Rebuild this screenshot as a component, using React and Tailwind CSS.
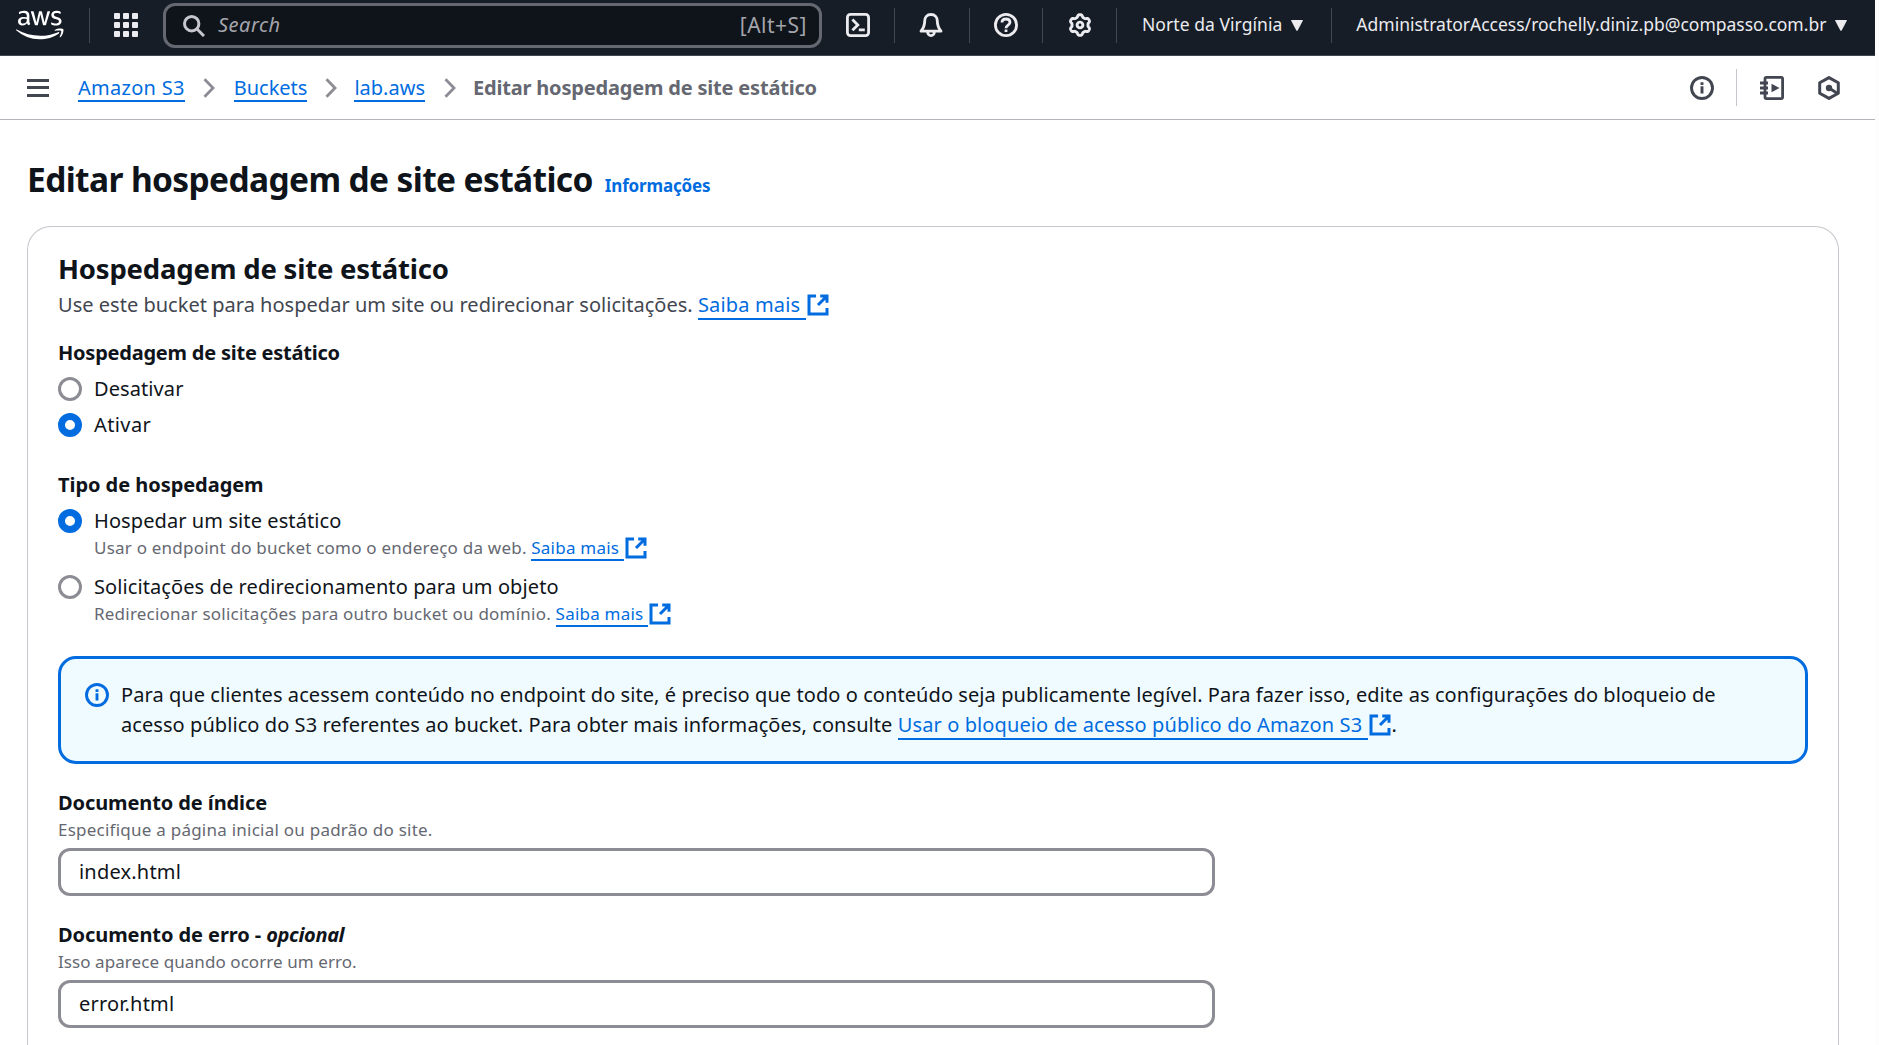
import React from "react";
import { FaAws } from "react-icons/fa";

const GEAR = (() => {
  const pts = [];
  for (let i = 0; i < 180; i++) {
    const a = (i / 180) * Math.PI * 2;
    const r = 9.15 + 1.25 * Math.tanh(1.8 * Math.cos(6 * (a - Math.PI / 2)));
    pts.push(`${(12 + r * Math.cos(a)).toFixed(2)} ${(12 + r * Math.sin(a)).toFixed(2)}`);
  }
  return `M${pts.join("L")}Z`;
})();

function Icon({ children, className = "", w = 3 }) {
  return (
    <svg viewBox="0 0 24 24" width="24" height="24" fill="none" stroke="currentColor" strokeWidth={w} className={`block h-6 w-6 shrink-0 ${className}`}>
      {children}
    </svg>
  );
}

const InfoIcon = ({ className = "" }) => (
  <Icon className={className} w={2.9}>
    <circle cx="12" cy="12" r="10.5" />
    <path d="M12 10.3v7.2M12 6.2v2.7" />
  </Icon>
);

function External({ small }) {
  return (
    <svg
      viewBox="0 0 16 16"
      fill="none"
      stroke="#006ce0"
      strokeWidth="2"
      className={small ? "inline-block h-6 w-6 align-[-6px]" : "inline-block h-6 w-6 align-[-5px]"}
    >
      <path d="M9.5 2H14v4.5M8 8 14 2M14 10v4H2V2h4.7" />
    </svg>
  );
}

function Link({ children, small, className = "" }) {
  return (
    <span className="whitespace-nowrap">
      <a className={`border-b-2 border-[#006ce0] text-[#006ce0] ${className}`}>{children}&nbsp;</a>
      <External small={small} />
    </span>
  );
}

function Radio({ checked }) {
  return checked ? (
    <span className="h-6 w-6 shrink-0 rounded-full border-[7px] border-[#006ce0] bg-white" />
  ) : (
    <span className="h-6 w-6 shrink-0 rounded-full border-3 border-[#8c8c94] bg-white" />
  );
}

function Option({ checked, label, className = "", children }) {
  return (
    <div className={`flex ${className}`}>
      <div className="mr-3 flex h-[30px] items-center">
        <Radio checked={checked} />
      </div>
      <div>
        <div className="h-[30px] leading-[30px] tracking-[0.09px]">{label}</div>
        {children}
      </div>
    </div>
  );
}

const Label = ({ children, className = "" }) => (
  <div className={`h-[30px] font-bold leading-[30px] ${className}`}>{children}</div>
);

const Field = ({ value }) => (
  <input
    readOnly
    defaultValue={value}
    className="block h-12 w-[1157px] rounded-xl border-3 border-[#8c8c94] bg-white px-[18px] pb-[2px] tracking-[0.2px] outline-none"
  />
);

const Crumb = ({ children, className }) => (
  <a className={`mt-px border-b-2 border-[#006ce0] leading-[25px] text-[#006ce0] ${className}`}>{children}</a>
);

const Chevron = ({ className }) => (
  <svg viewBox="0 0 12 20" className={`h-5 w-3 shrink-0 ${className}`} fill="none" stroke="#8c8c94" strokeWidth="2.8">
    <path d="M1.5 1.2 10 10l-8.5 8.8" />
  </svg>
);

const Divider = ({ className }) => <span className={`h-[35px] w-px shrink-0 bg-[#424650] ${className}`} />;

const Caret = ({ className }) => (
  <svg viewBox="0 0 12 11" className={`h-[11px] w-3 shrink-0 ${className}`} fill="#ebebf0">
    <path d="M.6 0h10.8q.8 0 .4.8L6.8 10.3q-.8 1-1.6 0L.2.8Q-.2 0 .6 0Z" />
  </svg>
);

function TopBar() {
  return (
    <header className="flex h-14 shrink-0 items-start border-b border-[#424650] bg-[#161d26] text-[#ebebf0]">
      <FaAws className="ml-4 mt-[6px] h-[38px] w-[47.5px] shrink-0 text-white" />
      <div className="flex h-[50px] flex-1 items-center">
        <Divider className="ml-[25.5px]" />
        <div className="ml-[24px] grid w-6 shrink-0 grid-cols-3 gap-[3px]">
          {Array.from({ length: 9 }, (_, i) => (
            <span key={i} className="h-[6px] w-[6px] rounded-[1px] bg-[#ebebf0]" />
          ))}
        </div>
        <div className="ml-[25px] mt-px flex h-[45px] w-[659px] shrink-0 items-center rounded-xl border-3 border-[#656871] bg-[#0f141a]">
          <svg viewBox="0 0 22 22" className="ml-[17px] h-[22px] w-[22px]" fill="none" stroke="#c6c6cd" strokeWidth="3">
            <circle cx="8.7" cy="8.7" r="7.2" />
            <path d="m14 14 7 7" />
          </svg>
          <span className="mb-[2px] ml-[13px] italic tracking-[0.5px] text-[#a4a4ad]">Search</span>
          <span className="mb-[2px] ml-auto mr-[12px] text-[21px] leading-7 tracking-[0.5px] text-[#a4a4ad]">[Alt+S]</span>
        </div>
        <Icon w={2.8} className="ml-[24px]">
          <rect x="1.4" y="1.4" width="21.2" height="21.2" rx="3" />
          <path d="m6.4 6.6 5.4 5.3-5.4 5.3M12.8 16.8h6" />
        </Icon>
        <Divider className="ml-[24px]" />
        <Icon w={2.8} className="ml-[24px]">
          <path strokeLinejoin="round" d="M12 1.5c-4 0-6.3 2.8-6.3 6.4 0 4.7-1.2 7.1-3.7 10.3h20c-2.5-3.2-3.7-5.6-3.7-10.3 0-3.6-2.3-6.4-6.3-6.4Z" />
          <path d="M8.6 18.5c0 2.3 1.4 4.1 3.4 4.1s3.4-1.8 3.4-4.1" />
        </Icon>
        <Divider className="ml-[26px]" />
        <Icon w={2.8} className="ml-[24px]">
          <circle cx="12" cy="12" r="10.6" />
          <path d="M8 9.6C8 7.3 9.7 6 12 6s4 1.3 4 3.3c0 2.7-4 2.9-4 5.9M12 16.5v2.6" />
        </Icon>
        <Divider className="ml-[24px]" />
        <Icon w={2.9} className="ml-[25px]">
          <path d={GEAR} strokeLinejoin="round" />
          <circle cx="12" cy="12" r="2.9" />
        </Icon>
        <Divider className="ml-[24px]" />
        <span className="mb-px ml-[25px] whitespace-nowrap text-[17.5px] tracking-[0.05px]">Norte da Virgínia</span>
        <Caret className="ml-[9px]" />
        <Divider className="ml-[28px]" />
        <span className="mb-px ml-[24px] whitespace-nowrap text-[17.5px]">AdministratorAccess/rochelly.diniz.pb@compasso.com.br</span>
        <Caret className="ml-[9px]" />
      </div>
    </header>
  );
}

function Breadcrumbs() {
  return (
    <nav className="flex h-16 shrink-0 items-center border-b border-[#b4b4bb] text-[#424650]">
      <div className="ml-[27px] flex w-[22px] flex-col gap-[4.5px]">
        <span className="h-[3px] bg-[#424650]" />
        <span className="h-[3px] bg-[#424650]" />
        <span className="h-[3px] bg-[#424650]" />
      </div>
      <Crumb className="ml-[29px] tracking-[0.28px]">Amazon S3</Crumb>
      <Chevron className="ml-[18px]" />
      <Crumb className="ml-[19px]">Buckets</Crumb>
      <Chevron className="ml-[18px]" />
      <Crumb className="ml-[17px]">lab.aws</Crumb>
      <Chevron className="ml-[19px]" />
      <span className="ml-[17px] font-bold leading-[27px] tracking-[-0.19px] text-[#656871]">Editar hospedagem de site estático</span>
      <InfoIcon className="ml-auto" />
      <span className="ml-[22px] h-[37px] w-px bg-[#c6c6cd]" />
      <Icon w={2.8} className="ml-[23px]">
        <rect x="5" y="1.4" width="17.6" height="21.2" rx="1.5" />
        <path d="M0 7h8M0 12h8M0 17h8" />
        <path d="M11.5 7.8v8.4l8-4.2z" fill="currentColor" stroke="none" />
      </Icon>
      <Icon w={3} className="ml-[33px] mr-[34px]">
        <path d="M12 1.6 21.3 6.8v10.4L12 22.4 2.7 17.2V6.8Z" strokeLinejoin="round" />
        <circle cx="12" cy="12" r="3.2" fill="currentColor" stroke="none" />
        <path d="m12 12 8.5 5.5" />
      </Icon>
    </nav>
  );
}

export default function App() {
  return (
    <div className="h-[1045px] w-full overflow-hidden bg-[#fdfdfd] font-['Noto_Sans',sans-serif] text-[20px] text-[#0f141a]">
      <div className="flex h-full w-[1875px] flex-col bg-white">
        <TopBar />
        <Breadcrumbs />
        <div className="flex flex-1 flex-col pl-[27px] pr-[36px] pt-[36px]">
          <div className="flex h-[47px] items-baseline">
            <h1 className="text-[33.5px] font-bold leading-[46px] tracking-[-0.62px]">Editar hospedagem de site estático</h1>
            <a className="ml-[12px] text-[17px] font-bold tracking-[-0.15px] text-[#006ce0]">Informações</a>
          </div>

          <section className="mt-[23px] flex-1 rounded-t-3xl border border-b-0 border-[#c6c6cd] pl-[30px] pr-[30px] pt-[24px]">
            <h2 className="h-9 text-[27.5px] font-bold leading-9 tracking-[-0.2px]">Hospedagem de site estático</h2>
            <p className="mt-[3px] h-[30px] leading-[30px] tracking-[0.02px] text-[#424650]">
              Use este bucket para hospedar um site ou redirecionar solicitações. <Link className="tracking-[0.15px]">Saiba mais</Link>
            </p>

            <Label className="mt-[18px] tracking-[-0.23px]">Hospedagem de site estático</Label>
            <Option className="mt-[6px]" label="Desativar" />
            <Option className="mt-[6px]" label={<span className="tracking-[0.4px]">Ativar</span>} checked />

            <Label className="mt-[30px] tracking-[-0.05px]">Tipo de hospedagem</Label>
            <Option className="mt-[6px]" label="Hospedar um site estático" checked>
              <div className="h-6 text-[17px] leading-6 tracking-[0.22px] text-[#656871]">
                Usar o endpoint do bucket como o endereço da web. <Link small>Saiba mais</Link>
              </div>
            </Option>
            <Option className="mt-[12px]" label="Solicitações de redirecionamento para um objeto">
              <div className="h-6 text-[17px] leading-6 tracking-[0.22px] text-[#656871]">
                Redirecionar solicitações para outro bucket ou domínio. <Link small>Saiba mais</Link>
              </div>
            </Option>

            <div className="mt-[30px] flex h-[108px] rounded-[18px] border-3 border-[#006ce0] bg-[#f0fbff] pl-[24px] pt-[21px]">
              <InfoIcon className="mt-[3px] text-[#006ce0]" />
              <div className="ml-[12px] whitespace-nowrap leading-[30px] tracking-[0.07px]">
                <div className="h-[30px]">
                  Para que clientes acessem conteúdo no endpoint do site, é preciso que todo o conteúdo seja publicamente legível. Para fazer isso, edite as configurações do bloqueio de
                </div>
                <div className="h-[30px]">
                  acesso público do S3 referentes ao bucket. Para obter mais informações, consulte{" "}
                  <Link className="tracking-[0.11px]">Usar o bloqueio de acesso público do Amazon S3</Link>.
                </div>
              </div>
            </div>

            <Label className="mt-[24px] tracking-[-0.1px]">Documento de índice</Label>
            <p className="h-[30px] text-[17px] leading-6 tracking-[0.24px] text-[#656871]">Especifique a página inicial ou padrão do site.</p>
            <Field value="index.html" />

            <Label className="mt-[24px]">
              <span className="tracking-[-0.08px]">Documento de erro - </span>
              <i className="tracking-[-0.35px]">opcional</i>
            </Label>
            <p className="h-[30px] text-[17px] leading-6 tracking-[0.07px] text-[#656871]">Isso aparece quando ocorre um erro.</p>
            <Field value="error.html" />
          </section>
        </div>
      </div>
    </div>
  );
}
